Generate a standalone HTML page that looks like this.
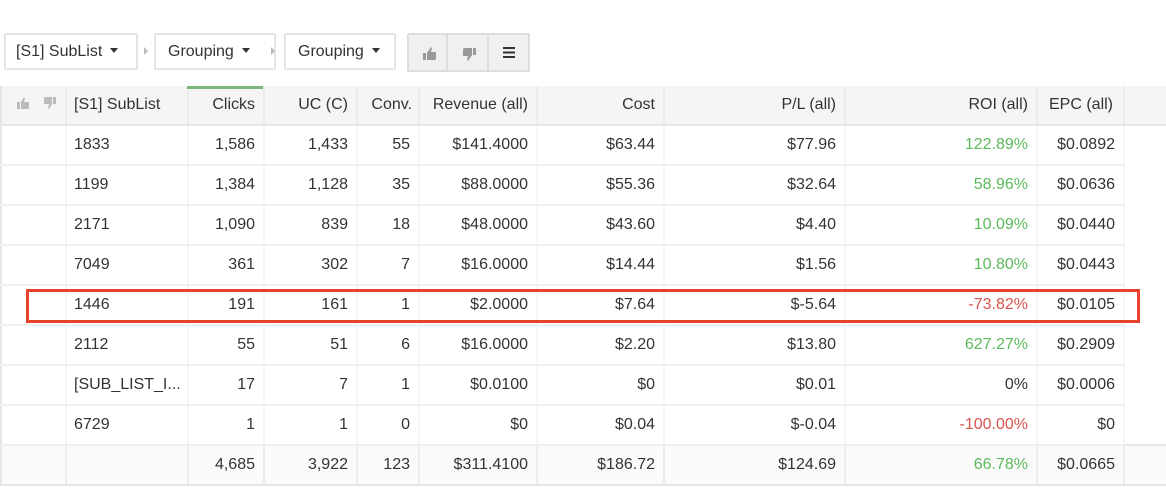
<!DOCTYPE html>
<html><head><meta charset="utf-8"><style>
*{box-sizing:border-box;margin:0;padding:0}
body{width:1166px;height:492px;background:#fff;font-family:"Liberation Sans",sans-serif;color:#333;font-size:16px;position:relative;overflow:hidden}
.btn{position:absolute;top:33px;height:37px;border:2px solid #e4e4e4;border-radius:2px;background:#fff;font-size:16px;line-height:33px;padding-left:10px;color:#333}
.caret{display:inline-block;width:0;height:0;border-left:4.5px solid transparent;border-right:4.5px solid transparent;border-top:5px solid #333;vertical-align:middle;margin-left:8px;margin-top:-2px}
.sep{position:absolute;top:47px;width:0;height:0;border-top:4px solid transparent;border-bottom:4px solid transparent;border-left:4px solid #bbb}
.grp{position:absolute;top:33px;left:407px;width:123px;height:39px;border:2px solid #ddd;background:#f0f0f0;border-radius:2px}
.grp div{position:absolute;top:0;height:35px;border-right:2px solid #ddd}
table{position:absolute;top:86px;left:0;border-collapse:collapse;table-layout:fixed;width:1166px}
td{height:40px;padding:0 8px;text-align:right;white-space:nowrap;overflow:hidden;border-bottom:2px solid #f0f0f0;border-right:2px solid #f6f6f6}
tr.h td{background:#f5f5f5;border-bottom:2px solid #e6e6e6;border-right:2px solid #ececec;height:39px}
tr.f td{background:#fafafa;border-top:2px solid #e6e6e6;border-bottom:2px solid #e6e6e6;border-right:2px solid #ececec}
td.l{text-align:left;padding-left:7px}
td.x{border:none;background:#fff}
tr.h td.x,tr.f td.x{background:#f5f5f5;border-right:none}
tr.f td.x{background:#fafafa}
td.first{border-left:2px solid #e6e6e6}
.g{color:#5cb85c}.r{color:#d9534f}
.red{position:absolute;left:26px;top:289px;width:1114px;height:34px;border:3px solid #e8412c}
.gb{position:absolute;left:187px;top:86px;width:76px;height:3px;background:#7cb87a}
</style></head><body>
<div class="btn" style="left:4px;width:134px">[S1] SubList<span class="caret"></span></div>
<div class="sep" style="left:144px"></div>
<div class="btn" style="left:154px;width:122px;padding-left:12px">Grouping<span class="caret"></span></div>
<div class="sep" style="left:271px"></div>
<div class="btn" style="left:284px;width:112px;padding-left:12px">Grouping<span class="caret"></span></div>
<div class="grp">
 <div style="left:0;width:39px"><svg width="39" height="35"><path d="M14 18h3v7h-3zM18 18l4-6 1 1-1 4h5v7l-1 1h-8z" fill="#999"/></svg></div>
 <div style="left:39px;width:41px"><svg width="39" height="35"><path d="M25 13h3v7h-3zM24 13v7l-4 6-1-1 1-4h-5v-7l1-1z" fill="#999"/></svg></div>
 <div style="left:80px;width:39px;border:none"><svg width="39" height="35"><path d="M14 12h12v2H14zM14 16.5h12v2H14zM14 21h12v2H14z" fill="#333"/></svg></div>
</div>
<table>
<colgroup><col style="width:65px"><col style="width:122px"><col style="width:76px"><col style="width:93px"><col style="width:62px"><col style="width:118px"><col style="width:127px"><col style="width:181px"><col style="width:192px"><col style="width:87px"><col style="width:43px"></colgroup>
<tr class="h"><td class="first" style="text-align:left;padding-left:14px"><svg width="40" height="14"><path d="M1 6h3v7H1zM5 6l3-5 1 1-1 4h5v6l-1 1H5z" fill="#bbb"/><path d="M37 1h3v7h-3zM36 1v7l-3 5-1-1 1-4h-5V2l1-1z" fill="#bbb"/></svg></td><td class="l">[S1] SubList</td><td>Clicks</td><td>UC (C)</td><td style="padding-right:6px">Conv.</td><td>Revenue (all)</td><td>Cost</td><td>P/L (all)</td><td>ROI (all)</td><td class="l" style="padding-left:11px">EPC (all)</td><td class="x"></td></tr>
<tr><td class="first"></td><td class="l">1833</td><td>1,586</td><td>1,433</td><td>55</td><td>$141.4000</td><td>$63.44</td><td>$77.96</td><td class="g">122.89%</td><td>$0.0892</td><td class="x"></td></tr>
<tr><td class="first"></td><td class="l">1199</td><td>1,384</td><td>1,128</td><td>35</td><td>$88.0000</td><td>$55.36</td><td>$32.64</td><td class="g">58.96%</td><td>$0.0636</td><td class="x"></td></tr>
<tr><td class="first"></td><td class="l">2171</td><td>1,090</td><td>839</td><td>18</td><td>$48.0000</td><td>$43.60</td><td>$4.40</td><td class="g">10.09%</td><td>$0.0440</td><td class="x"></td></tr>
<tr><td class="first"></td><td class="l">7049</td><td>361</td><td>302</td><td>7</td><td>$16.0000</td><td>$14.44</td><td>$1.56</td><td class="g">10.80%</td><td>$0.0443</td><td class="x"></td></tr>
<tr><td class="first"></td><td class="l">1446</td><td>191</td><td>161</td><td>1</td><td>$2.0000</td><td>$7.64</td><td>$-5.64</td><td class="r">-73.82%</td><td>$0.0105</td><td class="x"></td></tr>
<tr><td class="first"></td><td class="l">2112</td><td>55</td><td>51</td><td>6</td><td>$16.0000</td><td>$2.20</td><td>$13.80</td><td class="g">627.27%</td><td>$0.2909</td><td class="x"></td></tr>
<tr><td class="first"></td><td class="l">[SUB_LIST_I...</td><td>17</td><td>7</td><td>1</td><td>$0.0100</td><td>$0</td><td>$0.01</td><td>0%</td><td>$0.0006</td><td class="x"></td></tr>
<tr><td class="first"></td><td class="l">6729</td><td>1</td><td>1</td><td>0</td><td>$0</td><td>$0.04</td><td>$-0.04</td><td class="r">-100.00%</td><td>$0</td><td class="x"></td></tr>
<tr class="f"><td class="first"></td><td></td><td>4,685</td><td>3,922</td><td>123</td><td>$311.4100</td><td>$186.72</td><td>$124.69</td><td class="g">66.78%</td><td>$0.0665</td><td class="x"></td></tr>
</table>
<div class="gb"></div>
<div class="red"></div>
</body></html>
